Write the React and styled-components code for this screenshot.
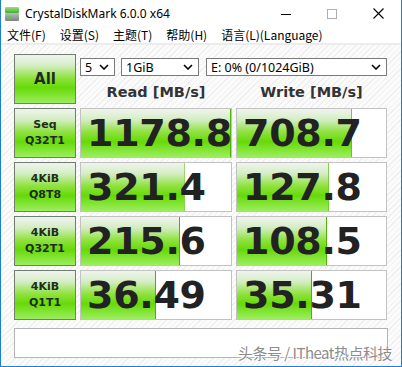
import React from "react";
import styled, { createGlobalStyle } from "styled-components";

const GlobalStyle = createGlobalStyle`
  html, body { margin: 0; padding: 0; background: #fff; }
  body { font-family: "Noto Sans", "Noto Sans CJK SC", sans-serif; }
`;

const greenFill = `linear-gradient(to bottom, #f0f3ee 0%, #d4eec4 22%, #8fe23e 48%, #66da08 68%, #9cee5e 100%)`;

const Window = styled.div`
  position: relative;
  width: 402px;
  height: 367px;
  box-sizing: border-box;
  border: 1px solid #1a80d6;
  border-top: none;
  display: flex;
  flex-direction: column;
  overflow: hidden;
  background: #fff;
`;

const TitleBar = styled.div`
  height: 27px;
  display: flex;
  align-items: center;
  padding-left: 3px;
`;

const Title = styled.span`
  margin-left: 5px;
  font-size: 12px;
  color: #000;
`;

const Controls = styled.div`
  margin-left: auto;
  display: flex;
  height: 100%;
`;

const Ctrl = styled.div`
  width: 46px;
  height: 100%;
  display: flex;
  align-items: center;
  justify-content: center;
`;

const MenuBar = styled.div`
  height: 16px;
  display: flex;
  align-items: center;
  gap: 14px;
  padding-left: 6px;
  border-bottom: 2px solid #ececec;
`;

const MenuItem = styled.span`
  font-family: "Noto Sans CJK SC", "Noto Sans", sans-serif;
  font-size: 12px;
  color: #000;
  line-height: 16px;
`;

const Content = styled.div`
  flex: 1;
  padding: 9px 13px 0 13px;
  background: repeating-linear-gradient(135deg, #fbfbfb 0px, #fbfbfb 3px, #efefef 3px, #efefef 4px);
`;

const TopSection = styled.div`
  display: flex;
  gap: 4px;
`;

const GreenButton = styled.div`
  width: 62px;
  height: 50px;
  box-sizing: border-box;
  border: 1px solid #6f7f6f;
  background: ${greenFill};
  display: flex;
  flex-direction: column;
  align-items: center;
  justify-content: center;
  font-family: "DejaVu Sans", Verdana, sans-serif;
  font-weight: bold;
  color: #1f2b1f;
  font-size: ${(p) => (p.$big ? "15px" : "11px")};
  line-height: ${(p) => (p.$big ? "1" : "16px")};
`;

const Side = styled.div`
  flex: 1;
  display: flex;
  flex-direction: column;
`;

const SelectRow = styled.div`
  margin-top: 4px;
  display: flex;
  gap: 6px;
`;

const Select = styled.div`
  width: ${(p) => p.$w}px;
  height: 18px;
  box-sizing: border-box;
  border: 1px solid #7a7a7a;
  background: #fff;
  display: flex;
  align-items: center;
  justify-content: space-between;
  padding: 0 5px 0 4px;
  font-size: 12.5px;
  color: #000;
`;

const HeaderRow = styled.div`
  flex: 1;
  display: grid;
  grid-template-columns: 152px 151px;
  column-gap: 4px;
  align-items: center;
  padding-top: 3px;
`;

const Header = styled.div`
  text-align: center;
  font-family: "DejaVu Sans", Verdana, sans-serif;
  font-weight: bold;
  font-size: 14.5px;
  color: #333;
`;

const Row = styled.div`
  margin-top: 4px;
  display: grid;
  grid-template-columns: 62px 152px 151px;
  column-gap: 4px;
`;

const ResultBox = styled.div`
  height: 50px;
  box-sizing: border-box;
  border: 1px solid #c2c2c2;
  background-color: #fff;
  background-image: linear-gradient(to left, #4cb400 0px, #4cb400 1px, transparent 1px), ${greenFill};
  background-repeat: no-repeat;
  background-size: ${(p) => p.$fill}% 100%;
  display: flex;
  align-items: center;
  padding-left: 6px;
  overflow: hidden;
  font-family: "DejaVu Sans", Verdana, sans-serif;
  font-weight: bold;
  font-size: 38px;
  letter-spacing: -0.3px;
  color: #222;
  white-space: nowrap;
`;

const MessageBox = styled.div`
  margin-top: 8px;
  height: 30px;
  box-sizing: border-box;
  border: 1px solid #b4b4b4;
  background: #fff;
`;

const Watermark = styled.div`
  position: absolute;
  right: 9px;
  bottom: 3px;
  font-family: "Noto Sans CJK SC", sans-serif;
  font-size: 15px;
  letter-spacing: -0.5px;
  color: #8c8c8c;
  text-shadow: 0 0 1px #fff, 1px 1px 0 #fff, -1px -1px 0 #fff;
`;

const Chevron = () => (
  <svg width="10" height="6" viewBox="0 0 10 6">
    <path d="M1 1 L5 5 L9 1" fill="none" stroke="#000" strokeWidth="1.6" />
  </svg>
);

const AppIcon = () => (
  <svg width="16" height="16" viewBox="0 0 16 16">
    <defs>
      <linearGradient id="gtop" x1="0" y1="0" x2="0" y2="1">
        <stop offset="0" stopColor="#9de27a" />
        <stop offset="1" stopColor="#3fae3a" />
      </linearGradient>
      <linearGradient id="gbot" x1="0" y1="0" x2="0" y2="1">
        <stop offset="0" stopColor="#b9bdb9" />
        <stop offset="1" stopColor="#7e837e" />
      </linearGradient>
    </defs>
    <rect x="1" y="1" width="14" height="6" rx="1" fill="url(#gtop)" />
    <rect x="1" y="7" width="14" height="8" rx="1" fill="url(#gbot)" />
    <rect x="3" y="10" width="4" height="2" fill="#4cd24c" />
  </svg>
);

const rows = [
  { a: "Seq", b: "Q32T1", read: "1178.8", rf: 100, write: "708.7", wf: 77 },
  { a: "4KiB", b: "Q8T8", read: "321.4", rf: 69, write: "127.8", wf: 61.5 },
  { a: "4KiB", b: "Q32T1", read: "215.6", rf: 66, write: "108.5", wf: 60.5 },
  { a: "4KiB", b: "Q1T1", read: "36.49", rf: 50, write: "35.31", wf: 50.5 },
];

const menus = ["文件(F)", "设置(S)", "主题(T)", "帮助(H)", "语言(L)(Language)"];

export default function App() {
  return (
    <>
      <GlobalStyle />
      <Window>
        <TitleBar>
          <AppIcon />
          <Title>CrystalDiskMark 6.0.0 x64</Title>
          <Controls>
            <Ctrl>
              <svg width="10" height="10" viewBox="0 0 10 10">
                <path d="M0 5.5 H10" stroke="#000" strokeWidth="1" />
              </svg>
            </Ctrl>
            <Ctrl>
              <svg width="10" height="10" viewBox="0 0 10 10">
                <rect x="0.5" y="0.5" width="9" height="9" fill="none" stroke="#b0b0b0" strokeWidth="1" />
              </svg>
            </Ctrl>
            <Ctrl>
              <svg width="11" height="11" viewBox="0 0 11 11">
                <path d="M0.5 0.5 L10.5 10.5 M10.5 0.5 L0.5 10.5" stroke="#000" strokeWidth="1.1" />
              </svg>
            </Ctrl>
          </Controls>
        </TitleBar>
        <MenuBar>
          {menus.map((m) => (
            <MenuItem key={m}>{m}</MenuItem>
          ))}
        </MenuBar>
        <Content>
          <TopSection>
            <GreenButton $big>All</GreenButton>
            <Side>
              <SelectRow>
                <Select $w={35}>5<Chevron /></Select>
                <Select $w={78}>1GiB<Chevron /></Select>
                <Select $w={181} style={{ marginLeft: 1 }}>E: 0% (0/1024GiB)<Chevron /></Select>
              </SelectRow>
              <HeaderRow>
                <Header>Read [MB/s]</Header>
                <Header>Write [MB/s]</Header>
              </HeaderRow>
            </Side>
          </TopSection>
          {rows.map((r, i) => (
            <Row key={i}>
              <GreenButton>
                <span>{r.a}</span>
                <span>{r.b}</span>
              </GreenButton>
              <ResultBox $fill={r.rf}>{r.read}</ResultBox>
              <ResultBox $fill={r.wf}>{r.write}</ResultBox>
            </Row>
          ))}
          <MessageBox />
        </Content>
        <Watermark>头条号 / ITheat热点科技</Watermark>
      </Window>
    </>
  );
}
